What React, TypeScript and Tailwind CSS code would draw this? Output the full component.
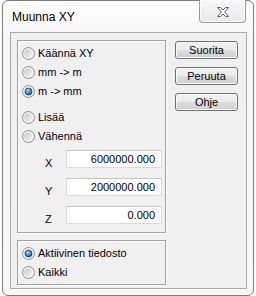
import { type ReactNode } from "react";

function Radio({ checked = false }: { checked?: boolean }) {
  return (
    <svg width="13" height="13" viewBox="0 0 13 13" className="shrink-0">
      <defs>
        <linearGradient id="rin" x1="0" y1="0" x2="1" y2="1">
          <stop offset="0" stopColor="#c3c6cb" />
          <stop offset="1" stopColor="#fbfbfb" />
        </linearGradient>
        <radialGradient id="rdot" cx="0.4" cy="0.35" r="0.7">
          <stop offset="0" stopColor="#a8e2ff" />
          <stop offset="0.5" stopColor="#3d94d6" />
          <stop offset="1" stopColor="#134f8c" />
        </radialGradient>
      </defs>
      <circle cx="6.5" cy="6.5" r="6" fill="#f3f3f3" stroke="#8e8f8f" />
      {checked ? (
        <circle cx="6.5" cy="6.5" r="3.5" fill="url(#rdot)" stroke="#1c3e66" strokeWidth="0.8" />
      ) : (
        <circle cx="6.5" cy="6.5" r="4.2" fill="url(#rin)" />
      )}
    </svg>
  );
}

function RadioRow({ label, checked }: { label: string; checked?: boolean }) {
  return (
    <div className="flex h-[19px] items-center gap-[3px]">
      <Radio checked={checked} />
      <span className="leading-[13px]">{label}</span>
    </div>
  );
}

function Group({ children, className }: { children: ReactNode; className?: string }) {
  return (
    <div
      className={
        "w-[149px] border border-[#a0a0a0] pl-[4px] shadow-[inset_1px_1px_0_#fff,1px_1px_0_#fff] " +
        (className ?? "")
      }
    >
      {children}
    </div>
  );
}

function ValueField({ label, value }: { label: string; value: string }) {
  return (
    <div className="flex items-start">
      <span className="mt-[7px] w-[44px] pl-[23px] leading-[13px]">{label}</span>
      <div className="flex h-[18px] w-[96px] items-center justify-end border border-[#dadada] border-t-[#c4c4c4] bg-white pr-[6px] leading-[13px]">
        {value}
      </div>
    </div>
  );
}

function DialogButton({ children }: { children: ReactNode }) {
  return (
    <button className="flex h-[18px] w-[63px] items-center justify-center rounded-[3px] border border-[#707070] bg-[linear-gradient(#f2f2f2_0%,#ebebeb_50%,#dddddd_51%,#cfcfcf_100%)] leading-[13px] text-black shadow-[inset_0_0_0_1px_#fcfcfc]">
      {children}
    </button>
  );
}

export default function App() {
  return (
    <div className="h-[296px] w-[256px] bg-white font-['Liberation_Sans',Arial,sans-serif] text-[11px] text-black">
      <div className="ml-[2px] flex h-[296px] w-[252px] flex-col rounded-[6px] border border-[#7c7c7c] bg-[linear-gradient(#fdfdfd,#f6f6f6_40px,#f8f8f8)] px-[6px] pb-[6px] pl-[7px]">
        {/* Title bar */}
        <div className="flex h-[31px] shrink-0 items-start justify-between">
          <span className="mt-[10px] pl-[2px] text-[12px] leading-[12px]">Muunna XY</span>
          <div className="-mt-[1px] mr-[1px] flex h-[23px] w-[47px] items-center justify-center rounded-b-[4px] border border-t-0 border-[#9a9a9a] bg-[linear-gradient(#f7f7f7,#e9e9e9)] shadow-[inset_0_0_0_1px_#fbfbfb]">
            <svg width="12" height="10" viewBox="0 0 12 10" className="mt-[1px]">
              <path
                d="M0.5 0.5 H3.5 L6 3 L8.5 0.5 H11.5 L7.7 5 L11.5 9.5 H8.5 L6 7 L3.5 9.5 H0.5 L4.3 5 Z"
                fill="#fdfdfd"
                stroke="#5a5e72"
                strokeLinejoin="round"
              />
            </svg>
          </div>
        </div>

        {/* Client area */}
        <div className="flex h-[257px] w-[237px] gap-[9px] border border-[#a8a8a8] bg-[#f0f0f0] pl-[6px] pt-[7px]">
          <div className="flex flex-col gap-[7px]">
            <Group className="pb-[6px] pt-[3px]">
              <RadioRow label="Käännä XY" />
              <RadioRow label="mm -> m" />
              <RadioRow label="m -> mm" checked />
              <div className="mt-[7px]">
                <RadioRow label="Lisää" />
                <RadioRow label="Vähennä" />
              </div>
              <div className="mt-[4px] flex flex-col gap-[8px]">
                <ValueField label="X" value="6000000.000" />
                <ValueField label="Y" value="2000000.000" />
                <ValueField label="Z" value="0.000" />
              </div>
            </Group>
            <Group className="pb-[2px] pt-[3px]">
              <RadioRow label="Aktiivinen tiedosto" checked />
              <RadioRow label="Kaikki" />
            </Group>
          </div>

          <div className="mt-[1px] flex flex-col gap-[8px]">
            <DialogButton>Suorita</DialogButton>
            <DialogButton>Peruuta</DialogButton>
            <DialogButton>Ohje</DialogButton>
          </div>
        </div>
      </div>
    </div>
  );
}
